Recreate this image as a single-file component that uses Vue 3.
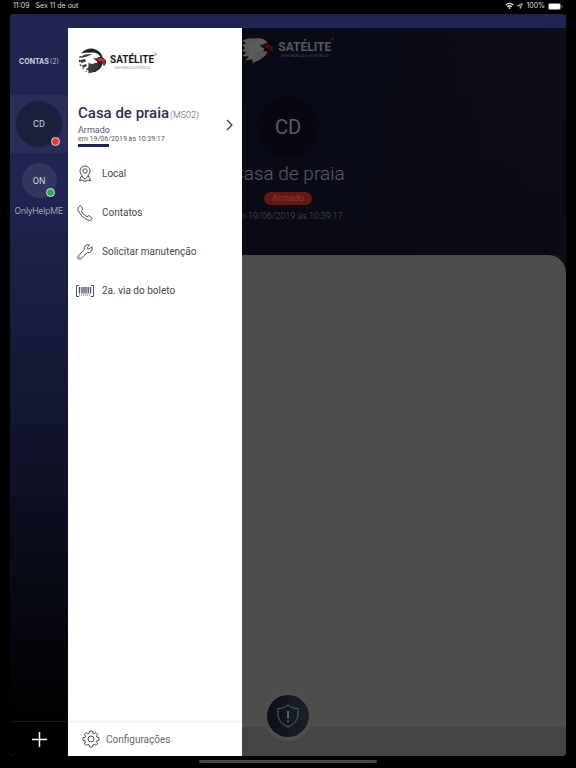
<script setup>
import { ref } from 'vue'

const accounts = ref([
    { id: 1, initials: 'CD', name: '', status: 'armed', active: true },
    { id: 2, initials: 'ON', name: 'OnlyHelpME', status: 'ok', active: false }
])

const current = ref({
    initials: 'CD',
    name: 'Casa de praia',
    code: 'MS02',
    status: 'Armado',
    date: 'em 19/06/2019 às 10:39:17'
})

const menu = [
    { id: 'local', label: 'Local' },
    { id: 'contatos', label: 'Contatos' },
    { id: 'manutencao', label: 'Solicitar manutenção' },
    { id: 'boleto', label: '2a. via do boleto' }
]

const selectAccount = (account) => {
    accounts.value.forEach(a => a.active = a.id === account.id)
}
</script>

<template>
    <div class="device">
        <!-- shared logo -->
        <svg class="defs" aria-hidden="true">
            <symbol id="eagle" viewBox="0 0 28 27">
                <circle class="eagle__disc" cx="13" cy="12.5" r="12" />
                <path class="eagle__head" d="M0 7 C5 4 9 5 13 4.5 C18 4 21 6 22.5 9 L18 11.5 L20 15 L18 15 L19.500 19 L16.5 18.5 L16 22 L13 21.5 L9.5 27 L9 23 L3 24 L6 20.5 L0 20 L4 17 L0 15.500 L3 13 L0 10.500 L4 9Z" />
                <path class="eagle__shade" d="M3.500 8 Q8 5.500 14 6 L9 8.500 L3 10Z M2 12 L7 11 L8 13.500 L3 15Z M4 17.500 L8 16 L9 18 L5 20Z" />
                <path class="eagle__neck" d="M10.500 14.500 C12 16 15 16.500 18 14.500 L22 16.500 C20.500 21 17 22 14.500 24 L10.500 25.500 L10.500 22.500 L8 21.500 L10.500 19Z" />
                <path class="eagle__eye" d="M15 9.500 L19.500 11 L17 11.800Z" />
                <path class="eagle__beak" d="M17.500 12 C19.500 8.500 26 8.500 27.500 13 C28 15 27 16.500 26 17.500 C26 14.800 24 14 21.500 13.500 L19.500 15.500 L20 12.800Z" />
            </symbol>
        </svg>

        <header class="status">
            <span>11:09</span>
            <span>Sex 11 de out</span>
            <div class="status__right">
                <svg width="9" height="8" viewBox="0 0 18 14" aria-hidden="true">
                    <path d="M1.500 5 Q9 -1.500 16.500 5 M4.500 8.500 Q9 4.500 13.500 8.500" fill="none" stroke="#eee" stroke-width="2.500" />
                    <path d="M6.500 10.500 Q9 8.500 11.500 10.500 L9 13.500Z" fill="#eee" />
                </svg>
                <svg width="6" height="6" viewBox="0 0 12 12" aria-hidden="true">
                    <path d="M11 1 L1 5.500 H6.500 V11Z" fill="none" stroke="#ddd" stroke-width="1.500" />
                </svg>
                <span>100%</span>
                <svg width="15" height="7" viewBox="0 0 15 7" aria-hidden="true">
                    <rect x="0" y="0" width="13" height="7" rx="2" fill="#777" />
                    <rect x="1" y="1" width="11" height="5" rx="1" fill="#fff" />
                    <path d="M14 2.500 V4.500" stroke="#888" />
                </svg>
            </div>
        </header>

        <div class="app">
            <main class="page">
                <section class="hero">
                    <div class="logo logo--dark">
                        <svg class="logo__eagle"><use href="#eagle" /></svg>
                        <div class="logo__text">
                            <b>SATÉLITE</b>
                            <small>SEGURANÇA ELETRÔNICA</small>
                        </div>
                        <sup>®</sup>
                    </div>
                    <div class="hero__avatar">{{ current.initials }}</div>
                    <h1>{{ current.name }}</h1>
                    <span class="badge">{{ current.status }}</span>
                    <p>{{ current.date }}</p>
                </section>
                <section class="sheet">
                    <div class="sheet__bar">
                        <button class="fab" aria-label="Pânico">
                            <svg width="22" height="24" viewBox="0 0 22 24" fill="none" stroke="#5c6065" stroke-width="1" stroke-linejoin="round">
                                <path d="M11 1 C8 3.500 4.500 4.500 1 4.500 V10 C1 16 5 20.500 11 23 C17 20.500 21 16 21 10 V4.500 C17.500 4.500 14 3.500 11 1Z" />
                                <path d="M11 7 V14.500 M11 16.500 V18" stroke-width="2" />
                            </svg>
                        </button>
                    </div>
                </section>
            </main>

            <div class="side">
                <nav class="accounts">
                    <h2>CONTAS<span>({{ accounts.length }})</span></h2>
                    <button v-for="account in accounts" :key="account.id" class="account" :class="{ 'account--active': account.active }" @click="selectAccount(account)">
                        <span class="account__avatar">
                            {{ account.initials }}
                            <i class="dot" :class="'dot--' + account.status"></i>
                        </span>
                        <span v-if="account.name" class="account__name">{{ account.name }}</span>
                    </button>
                    <button class="accounts__add" aria-label="Adicionar conta">
                        <svg width="15" height="15" viewBox="0 0 15 15" stroke="#fff" stroke-width="1.500"><path d="M7.500 0 V15 M0 7.500 H15" /></svg>
                    </button>
                </nav>

                <aside class="drawer">
                    <div class="logo">
                        <svg class="logo__eagle"><use href="#eagle" /></svg>
                        <div class="logo__text">
                            <b>SATÉLITE</b>
                            <small>SEGURANÇA ELETRÔNICA</small>
                        </div>
                        <sup>®</sup>
                    </div>

                    <a href="#" class="current" @click.prevent>
                        <div>
                            <h2>{{ current.name }}<span>({{ current.code }})</span></h2>
                            <p class="current__status">{{ current.status }}</p>
                            <p class="current__date">{{ current.date }}</p>
                            <div class="current__line"></div>
                        </div>
                        <svg class="current__arrow" width="7" height="12" viewBox="0 0 7 12" fill="none" stroke="#333" stroke-width="1.200"><path d="M1 1 L6 6 L1 11" /></svg>
                    </a>

                    <ul class="menu">
                        <li v-for="item in menu" :key="item.id">
                            <a href="#" @click.prevent>
                                <svg v-if="item.id === 'local'" class="icon" viewBox="0 0 18 18">
                                    <path d="M9 14.500 C6 11 4 8.500 4 6 A5 5 0 0 1 14 6 C14 8.500 12 11 9 14.500Z" />
                                    <circle cx="9" cy="6" r="2.200" />
                                    <path d="M6 11.500 H5 L3.500 16 L6 15 L9 16.500 L12 15 L14.500 16 L13 11.500 H12" />
                                </svg>
                                <svg v-else-if="item.id === 'contatos'" class="icon" viewBox="0 0 18 18">
                                    <path d="M2.500 3 L4 1.800 Q5 1.500 5.500 2.500 L6.500 5 Q6.800 5.800 6 6.500 L5.300 7.200 Q7.500 11 11 12.800 L12 12 Q12.800 11.500 13.500 12 L15.800 13.800 Q16.500 14.500 15.800 15.200 L14.500 16.200 Q13.500 16.800 11.500 16 Q5 13 2 6.500 Q1.200 4.500 2.500 3Z" />
                                </svg>
                                <svg v-else-if="item.id === 'manutencao'" class="icon" viewBox="0 0 18 18">
                                    <path d="M15.800 3.500 L13.300 6 L11.500 5.800 L11.200 4.500 L13.700 2 Q11 1 9.200 2.800 Q7.700 4.300 8.400 6.700 L2.200 13 Q1 14.500 2.200 15.800 Q3.500 17 5 15.700 L11.200 9.500 Q13.500 10 15 8.500 Q16.800 6.500 15.800 3.500Z" />
                                    <circle cx="3.700" cy="14.300" r="0.300" />
                                </svg>
                                <svg v-else class="icon" viewBox="0 0 18 18">
                                    <path d="M3 3.500 H0.500 V6 M0.500 12 V14.500 H3 M15 3.500 H17.500 V6 M17.500 12 V14.500 H15 M0.500 5 V13 M17.500 5 V13" />
                                    <path d="M3.500 5 V11.500 M6 5 V11.500 M8 5 V11.500 M10 5 V11.500 M12.200 5 V11.500 M14.500 5 V11.500" stroke-width="1.300" />
                                    <path d="M3 13 H15" stroke-dasharray="1 1" />
                                </svg>
                                {{ item.label }}
                            </a>
                        </li>
                    </ul>

                    <a href="#" class="settings" @click.prevent>
                        <svg class="icon" viewBox="0 0 18 18">
                            <path d="M7.500 1 H10.500 L11 3.200 L12.200 3.700 L14 2.500 L15.700 4.200 L14.400 6 L14.900 7.200 L17 7.600 V10.400 L14.900 10.800 L14.400 12 L15.700 13.800 L14 15.500 L12.200 14.300 L11 14.800 L10.500 17 H7.500 L7 14.800 L5.800 14.300 L4 15.500 L2.300 13.800 L3.600 12 L3.100 10.800 L1 10.400 V7.600 L3.100 7.200 L3.600 6 L2.300 4.200 L4 2.500 L5.800 3.700 L7 3.200Z" />
                            <circle cx="9" cy="9" r="3" />
                        </svg>
                        Configurações
                    </a>
                </aside>
            </div>
        </div>

        <div class="home"></div>
    </div>
</template>

<style>
body{
    margin: 0;
    background-color: #000;
}
</style>

<style scoped>
*{
    box-sizing: border-box;
}

h1, h2, p, ul{
    margin: 0;
    padding: 0;
    font-weight: 400;
}

button{
    border: none;
    background: none;
    padding: 0;
    font-family: inherit;
    color: inherit;
}

a{
    text-decoration: none;
}

.defs{
    position: absolute;
    width: 0;
    height: 0;
}

.device{
    min-height: 100vh;
    display: flex;
    flex-direction: column;
    padding: 0 10px;
    background-color: #000;
    font-family: Roboto, sans-serif;
}

.status{
    display: flex;
    align-items: center;
    gap: 6px;
    height: 14px;
    padding: 0 3px 2px;
    font-family: Inter, sans-serif;
    font-size: 7px;
    line-height: 12px;
    color: #ddd;
}

.status__right{
    display: flex;
    align-items: center;
    gap: 3px;
    margin-left: auto;
}

.app{
    position: relative;
    flex: 1;
    display: flex;
    padding-top: 14px;
    border-radius: 4px;
    overflow: hidden;
    background-color: #1f2450;
}

/* page behind the drawer */
.page{
    flex: 1;
    display: flex;
    flex-direction: column;
    background: linear-gradient(100deg, #090a17 50%, #101119);
}

.hero{
    display: flex;
    flex-direction: column;
    align-items: center;
    height: 227px;
    padding-top: 5px;
    background: linear-gradient(180deg, transparent, #0a0b17);
    color: #5c5c60;
}

.hero__avatar{
    display: flex;
    align-items: center;
    justify-content: center;
    width: 62px;
    height: 62px;
    margin-top: 32px;
    border-radius: 50%;
    background-color: #07080f;
    font-size: 20px;
}

.hero h1{
    margin-top: 4px;
    font-size: 19px;
    line-height: 24px;
    font-weight: 300;
}

.badge{
    margin-top: 6px;
    padding: 0 8px;
    border-radius: 7px;
    background-color: #651714;
    font-size: 9px;
    line-height: 13px;
    color: #7d4442;
}

.hero p{
    margin-top: 4px;
    font-size: 9px;
    line-height: 14px;
    font-weight: 300;
    color: #55555a;
}

.sheet{
    flex: 1;
    display: flex;
    flex-direction: column;
    justify-content: flex-end;
    border-radius: 0 18px 4px 0;
    background-color: #4d4d4d;
}

.sheet__bar{
    display: flex;
    justify-content: center;
    height: 29px;
    border-radius: 0 0 4px 0;
    background-color: #444;
}

.fab{
    display: flex;
    align-items: center;
    justify-content: center;
    width: 42px;
    height: 42px;
    margin-top: -32px;
    border-radius: 50%;
    background: linear-gradient(90deg, #0a0e18, #1a2329);
    box-shadow: 0 1px 0 3px #4f4f4f;
}

/* accounts + drawer, over the page */
.side{
    position: absolute;
    top: 0;
    bottom: 0;
    left: 0;
    display: flex;
}

.accounts{
    display: flex;
    flex-direction: column;
    width: 58px;
    background: linear-gradient(180deg, #1f2450 25%, #000 96%);
    color: #d2d3dc;
}

.accounts h2{
    margin: 42px 0 27px;
    text-align: center;
    font-family: Inter, sans-serif;
    font-size: 7px;
    line-height: 12px;
    font-weight: 700;
}

.accounts h2 span{
    margin-left: 1px;
    font-weight: 300;
}

.account{
    display: flex;
    flex-direction: column;
    align-items: center;
    gap: 7px;
    padding-top: 10px;
    font-size: 9px;
}

.account--active{
    padding: 6px 0;
    background-color: #2a2d58;
}

.account__avatar{
    position: relative;
    display: flex;
    align-items: center;
    justify-content: center;
    width: 35px;
    height: 35px;
    border-radius: 50%;
    background-color: #34375d;
}

.account--active .account__avatar{
    width: 46px;
    height: 46px;
    background-color: #1c1f3c;
}

.dot{
    position: absolute;
    right: 2px;
    bottom: 1px;
    width: 9px;
    height: 9px;
    border: 1px solid #ddd;
    border-radius: 50%;
    background-color: #e53935;
}

.dot--ok{
    background-color: #2fa36b;
}

.account__name{
    line-height: 12px;
    font-weight: 300;
}

.accounts__add{
    display: flex;
    align-items: center;
    justify-content: center;
    height: 35px;
    margin-top: auto;
    border-top: 1px solid #17171c;
}

.drawer{
    display: flex;
    flex-direction: column;
    width: 174px;
    margin-top: 14px;
    background-color: #fff;
    color: #3a3d4d;
}

.logo{
    --shade: #3a3a3a;
    display: flex;
    align-items: center;
    gap: 4px;
    color: #1a1a1a;
}

.drawer .logo{
    margin: 20px 0 0 10px;
}

.logo__eagle{
    width: 28px;
    height: 27px;
}

.logo__text{
    display: flex;
    flex-direction: column;
    align-items: center;
}

.logo b{
    font-size: 10px;
    line-height: 12px;
}

.logo small{
    font-size: 3px;
    line-height: 4px;
    color: #999;
}

.logo sup{
    align-self: flex-start;
    margin: 5px 0 0 -4px;
    font-size: 3px;
    line-height: 4px;
}

.eagle__disc{
    fill: #222;
}

.eagle__head{
    fill: #fff;
}

.eagle__shade, .eagle__neck{
    fill: var(--shade);
}

.eagle__eye{
    fill: #222;
}

.eagle__beak{
    fill: #d3242b;
    stroke: #222;
    stroke-width: 1;
}

.logo--dark{
    --shade: #f2f2f2;
    color: #58585c;
}

.logo--dark .logo__eagle{
    width: 32px;
    height: 31px;
    filter: brightness(0.36);
}

.logo--dark b{
    font-size: 12px;
    line-height: 14px;
}

.logo--dark small{
    font-size: 4px;
    color: #45454a;
}

.current{
    display: flex;
    align-items: center;
    justify-content: space-between;
    margin: 28px 9px 0 10px;
    color: #555868;
}

.current h2{
    font-size: 15px;
    line-height: 20px;
    font-weight: 500;
    color: #2c3054;
    white-space: nowrap;
}

.current h2 span{
    margin-left: 1px;
    font-size: 9px;
    font-weight: 300;
    color: #555868;
}

.current__status{
    font-size: 9px;
    line-height: 10px;
}

.current__date{
    font-size: 7px;
    line-height: 8px;
}

.current__line{
    width: 31px;
    height: 3px;
    margin-top: 1px;
    background-color: #1f2450;
}

.menu{
    margin-top: 7px;
    list-style: none;
}

.menu a{
    display: flex;
    align-items: center;
    gap: 8px;
    height: 39px;
    padding-left: 8px;
    font-size: 10px;
    line-height: 14px;
    color: #44464f;
}

.icon{
    width: 18px;
    height: 18px;
    flex: none;
    fill: none;
    stroke: #4a4e63;
    stroke-width: 1;
    stroke-linejoin: round;
}

.settings{
    display: flex;
    align-items: center;
    gap: 6px;
    height: 35px;
    margin-top: auto;
    padding-left: 14px;
    border-top: 1px solid #ececee;
    font-size: 10px;
    color: #666977;
}

.home{
    width: 32%;
    height: 3px;
    margin: 4px auto 5px;
    border-radius: 2px;
    background-color: #484848;
}
</style>
